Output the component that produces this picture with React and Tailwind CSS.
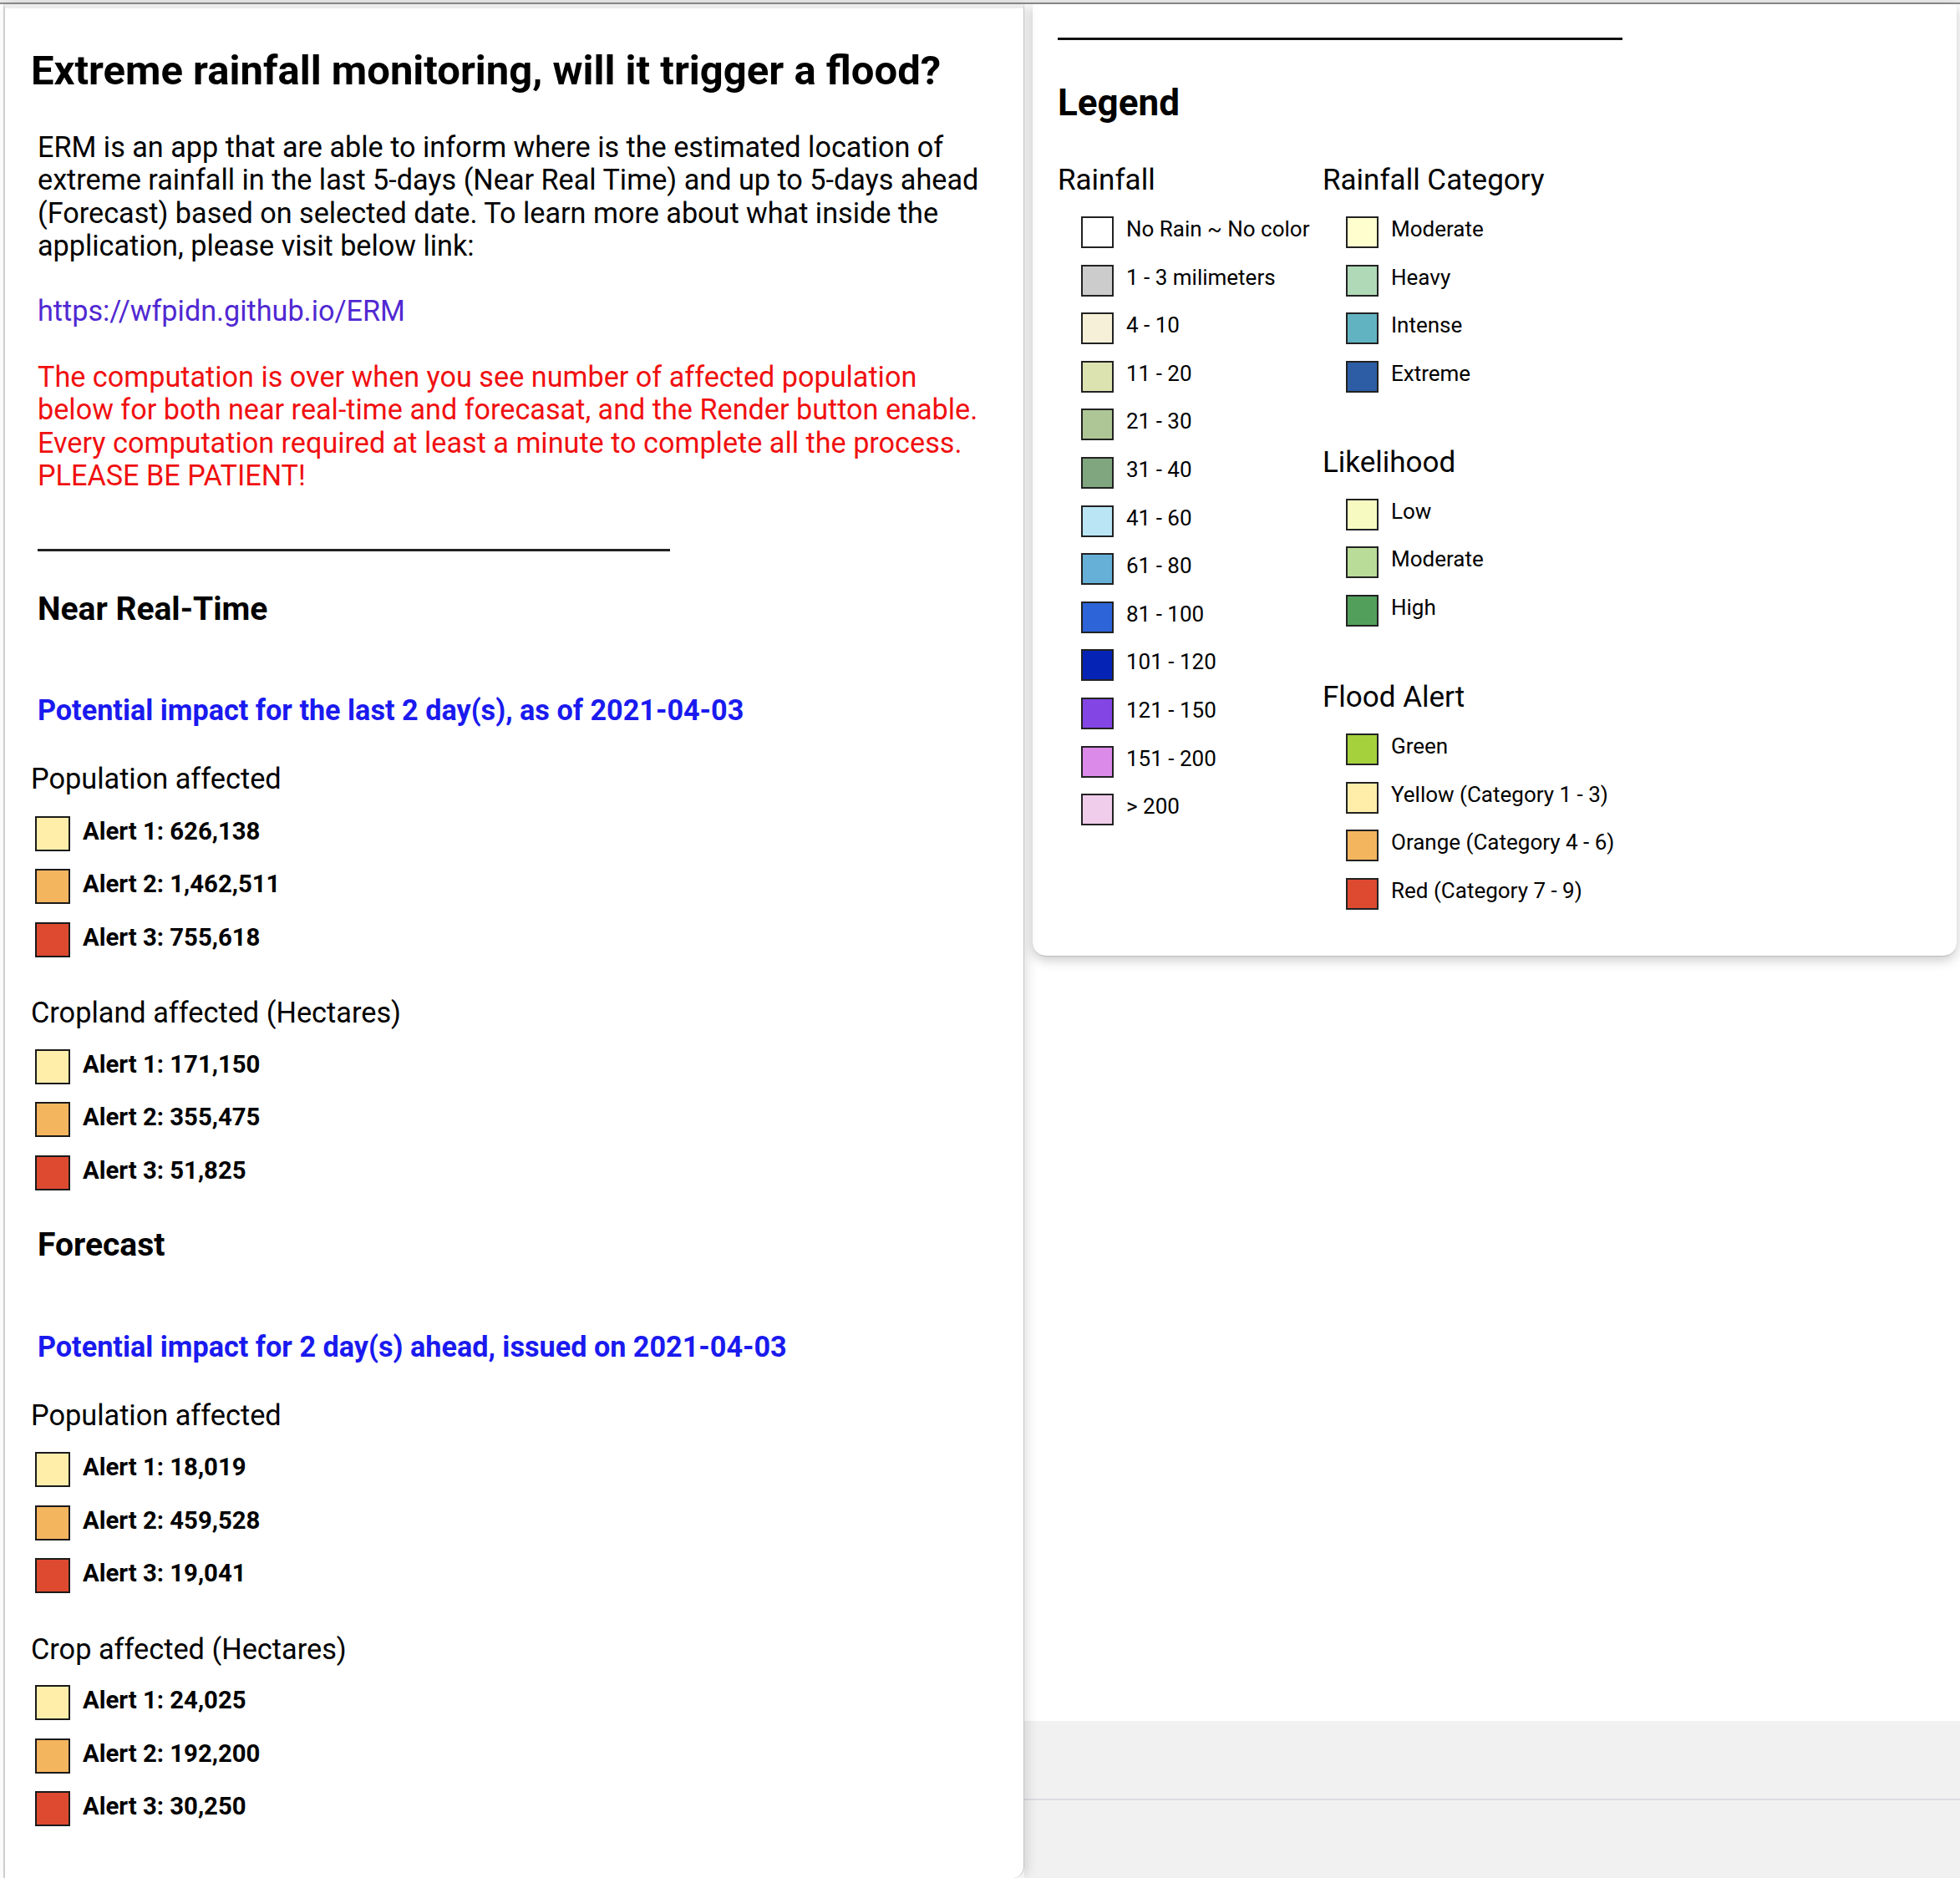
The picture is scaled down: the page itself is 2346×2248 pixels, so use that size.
import React from 'react';

const ALERT = {
  1: 'bg-[#feeeaa]',
  2: 'bg-[#f4b55f]',
  3: 'bg-[#dd4a30]',
};

const nrt = {
  population: ['626,138', '1,462,511', '755,618'],
  cropland: ['171,150', '355,475', '51,825'],
};

const forecast = {
  population: ['18,019', '459,528', '19,041'],
  crop: ['24,025', '192,200', '30,250'],
};

const rainfall = [
  ['bg-[#ffffff]', 'No Rain ~ No color'],
  ['bg-[#cccccc]', '1 - 3 milimeters'],
  ['bg-[#f6f0d8]', '4 - 10'],
  ['bg-[#dde3b0]', '11 - 20'],
  ['bg-[#aec595]', '21 - 30'],
  ['bg-[#80a67f]', '31 - 40'],
  ['bg-[#b9e5f5]', '41 - 60'],
  ['bg-[#66b0d7]', '61 - 80'],
  ['bg-[#2d64d8]', '81 - 100'],
  ['bg-[#0524b6]', '101 - 120'],
  ['bg-[#8445e5]', '121 - 150'],
  ['bg-[#dc8ae9]', '151 - 200'],
  ['bg-[#f0cdea]', '> 200'],
];

const category = [
  ['bg-[#fefecf]', 'Moderate'],
  ['bg-[#afd9b7]', 'Heavy'],
  ['bg-[#62b3c1]', 'Intense'],
  ['bg-[#2c5da5]', 'Extreme'],
];

const likelihood = [
  ['bg-[#f7fbc2]', 'Low'],
  ['bg-[#badc99]', 'Moderate'],
  ['bg-[#529f5b]', 'High'],
];

const floodAlert = [
  ['bg-[#a5d13c]', 'Green'],
  ['bg-[#feeeaa]', 'Yellow (Category 1 - 3)'],
  ['bg-[#f4b55f]', 'Orange (Category 4 - 6)'],
  ['bg-[#dd4a30]', 'Red (Category 7 - 9)'],
];

function AlertList({ values, className = '' }) {
  return (
    <div className={`flex flex-col gap-[21.5px] ${className}`}>
      {values.map((v, i) => (
        <div key={i} className="flex items-center h-[42px] ml-[36px]">
          <div className={`w-[42px] h-[42px] border-2 border-[#1a1a1a] ${ALERT[i + 1]}`} />
          <span className="ml-[15px] text-[29.3px] leading-[34px] font-bold -mt-[6px]">
            Alert {i + 1}: {v}
          </span>
        </div>
      ))}
    </div>
  );
}

function LegendRows({ items, className = '' }) {
  return (
    <div className={`flex flex-col gap-[19.6px] ${className}`}>
      {items.map(([color, label]) => (
        <div key={label} className="flex items-start h-[38px] ml-[28px]">
          <div className={`w-[39px] h-[38px] shrink-0 border-2 border-[#222] ${color}`} />
          <span className="ml-[15px] text-[26px] leading-[30px] whitespace-nowrap">{label}</span>
        </div>
      ))}
    </div>
  );
}

function LegendHeading({ children, className = '' }) {
  return <div className={`text-[35px] leading-[42px] ${className}`}>{children}</div>;
}

export default function App() {
  return (
    <div className="w-[2346px] h-[2248px] bg-white flex flex-col overflow-hidden text-black font-['Roboto','Liberation_Sans',sans-serif]">
      {/* top bar */}
      <div className="h-[5px] shrink-0 bg-[#e9e9e9] border-b-2 border-[#8d8d8d]" />

      <div className="flex flex-1 min-h-0">
        {/* Left panel */}
        <aside className="w-[1222px] ml-[4px] bg-white border-l-2 border-r border-t-[5px] border-l-[#cfcfcf] border-r-[#c4c4c4] border-t-[#ececec] rounded-br-[14px] shadow-[4px_0_14px_rgba(0,0,0,0.12)] z-10 relative">
          <h1 className="ml-[31px] mt-[47px] text-[49px] leading-[56px] font-bold whitespace-nowrap">
            Extreme rainfall monitoring, will it trigger a flood?
          </h1>

          <p className="ml-[39px] mt-[44px] text-[34.2px] leading-[39.3px] whitespace-nowrap">
            ERM is an app that are able to inform where is the estimated location of
            <br />
            extreme rainfall in the last 5-days (Near Real Time) and up to 5-days ahead
            <br />
            (Forecast) based on selected date. To learn more about what inside the
            <br />
            application, please visit below link:
          </p>

          <a className="block ml-[39px] mt-[38px] text-[34.2px] leading-[40px] text-[#5028d2] w-fit">
            https://wfpidn.github.io/ERM
          </a>

          <p className="ml-[39px] mt-[40px] text-[34.2px] leading-[39.3px] text-[#f01010] whitespace-nowrap">
            The computation is over when you see number of affected population
            <br />
            below for both near real-time and forecasat, and the Render button enable.
            <br />
            Every computation required at least a minute to complete all the process.
            <br />
            PLEASE BE PATIENT!
          </p>

          <div className="ml-[39px] mt-[68px] w-[757px] h-[3px] bg-[#222]" />

          {/* Near Real-Time */}
          <h2 className="ml-[39px] mt-[45px] text-[39px] leading-[48px] font-bold">Near Real-Time</h2>
          <div className="ml-[39px] mt-[75px] text-[34.2px] leading-[44px] font-bold text-[#1a1aef] whitespace-nowrap">
            Potential impact for the last 2 day(s), as of 2021-04-03
          </div>
          <div className="ml-[31px] mt-[38px] text-[34.3px] leading-[44px]">Population affected</div>
          <AlertList values={nrt.population} className="mt-[22.5px]" />
          <div className="ml-[31px] mt-[44.5px] text-[34.3px] leading-[44px]">Cropland affected (Hectares)</div>
          <AlertList values={nrt.cropland} className="mt-[21.5px]" />

          {/* Forecast */}
          <h2 className="ml-[39px] mt-[41px] text-[39px] leading-[48px] font-bold">Forecast</h2>
          <div className="ml-[39px] mt-[76px] text-[34.2px] leading-[44px] font-bold text-[#1a1aef] whitespace-nowrap">
            Potential impact for 2 day(s) ahead, issued on 2021-04-03
          </div>
          <div className="ml-[31px] mt-[38px] text-[34.3px] leading-[44px]">Population affected</div>
          <AlertList values={forecast.population} className="mt-[22.5px]" />
          <div className="ml-[31px] mt-[44.5px] text-[34.3px] leading-[44px]">Crop affected (Hectares)</div>
          <AlertList values={forecast.crop} className="mt-[21.5px]" />
        </aside>

        {/* Map area */}
        <div className="flex-1 flex flex-col">
          <div className="flex-1 bg-white pl-[10px] pr-[4px]">
            {/* Legend panel */}
            <section className="bg-white rounded-b-[16px] shadow-[0_4px_14px_rgba(0,0,0,0.22)] border-b border-[#bdbdbd] pl-[30px] pb-[55px]">
              <div className="pt-[40px]">
                <div className="w-[676px] h-[3px] bg-[#111]" />
              </div>
              <div className="mt-[49px] text-[44px] leading-[52px] font-bold">Legend</div>

              <div className="flex mt-[45.5px]">
                <div className="w-[317px]">
                  <LegendHeading>Rainfall</LegendHeading>
                  <LegendRows items={rainfall} className="mt-[22.5px]" />
                </div>
                <div>
                  <LegendHeading>Rainfall Category</LegendHeading>
                  <LegendRows items={category} className="mt-[22.5px]" />
                  <LegendHeading className="mt-[63.5px]">Likelihood</LegendHeading>
                  <LegendRows items={likelihood} className="mt-[21.5px]" />
                  <LegendHeading className="mt-[64px]">Flood Alert</LegendHeading>
                  <LegendRows items={floodAlert} className="mt-[22px]" />
                </div>
              </div>
            </section>
          </div>
          <div className="h-[188px] shrink-0 bg-[#f1f1f1] pt-[93px]">
            <div className="h-[2px] bg-[#dcdce2]" />
          </div>
        </div>
      </div>
    </div>
  );
}
